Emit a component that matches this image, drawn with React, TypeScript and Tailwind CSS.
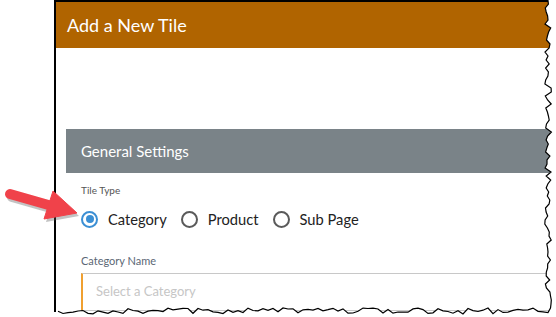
import React from "react";

const font = { fontFamily: "Lato, 'Open Sans', sans-serif" };

// jagged torn edge points (deterministic)
function tornPath() {
  let seed = 7;
  const rnd = () => {
    seed = (seed * 9301 + 49297) % 233280;
    return seed / 233280;
  };
  const pts: string[] = [];
  // right edge, top -> bottom
  for (let y = 0; y <= 310; y += 4) {
    const x = 548 + (rnd() - 0.5) * 7;
    pts.push(`${x.toFixed(1)},${y}`);
  }
  // bottom edge, right -> left
  for (let x = 548; x >= 54; x -= 5) {
    const y = 311 + (rnd() - 0.5) * 6;
    pts.push(`${x},${y.toFixed(1)}`);
  }
  return pts;
}

function Radio({ label, checked }: { label: string; checked?: boolean }) {
  return (
    <label className="flex items-center gap-[10px]">
      <span
        className={`flex h-[17px] w-[17px] items-center justify-center rounded-full border-2 ${
          checked ? "border-[#3b8fd4]" : "border-[#5a5a5a]"
        }`}
      >
        {checked && <span className="h-[8px] w-[8px] rounded-full bg-[#3b8fd4]" />}
      </span>
      <span className="text-[14.7px] text-[#222]">{label}</span>
    </label>
  );
}

export default function App() {
  const pts = tornPath();
  const edge = pts.join(" ");
  const mask = `556,0 ${edge} 54,317 556,317`;

  return (
    <div className="relative h-[317px] w-[556px] overflow-hidden bg-white" style={font}>
      <div className="ml-[54px] h-[312px] w-[500px] border-l-2 border-t-2 border-black">
        <div className="flex h-[46px] items-center bg-[#b06400] pl-[11px] text-[18px] text-white">
          Add a New Tile
        </div>

        <div className="ml-[10px] mt-[81px]">
          <div className="flex h-[44px] items-center bg-[#7a8388] pl-[15px] text-[15px] text-white">
            General Settings
          </div>

          <div className="pl-[15px]">
            <div className="mt-[10px] text-[10px] text-[#555]">Tile Type</div>
            <div className="mt-[10px] flex items-center gap-[14px]">
              <Radio label="Category" checked />
              <Radio label="Product" />
              <Radio label="Sub Page" />
            </div>

            <div className="mt-[23px] text-[11px] text-[#5b6775]">Category Name</div>
            <div className="mt-[3px] flex h-[38px] items-center border border-l-2 border-[#c8c8c8] border-l-[#f0a030] pl-[13px] text-[13px] text-[#c6c6c6]">
              Select a Category
            </div>
          </div>
        </div>
      </div>

      {/* torn edge overlay */}
      <svg className="absolute left-0 top-0" width="556" height="317" viewBox="0 0 556 317">
        <polygon points={mask} fill="#ffffff" />
        <polyline points={edge} fill="none" stroke="#000" strokeWidth="1.2" />
      </svg>

      {/* callout arrow */}
      <svg className="absolute left-0 top-0" width="120" height="240" viewBox="0 0 120 240">
        <g transform="translate(2,3)" opacity="0.35">
          <line x1="10" y1="194" x2="52" y2="206" stroke="#555" strokeWidth="10" strokeLinecap="round" />
          <polygon points="53,191 77,213 44,219" fill="#555" />
        </g>
        <line x1="10" y1="194" x2="52" y2="206" stroke="#f0424a" strokeWidth="10" strokeLinecap="round" />
        <polygon points="53,191 77,213 44,219" fill="#f0424a" strokeLinejoin="round" stroke="#f0424a" strokeWidth="1" />
      </svg>
    </div>
  );
}
